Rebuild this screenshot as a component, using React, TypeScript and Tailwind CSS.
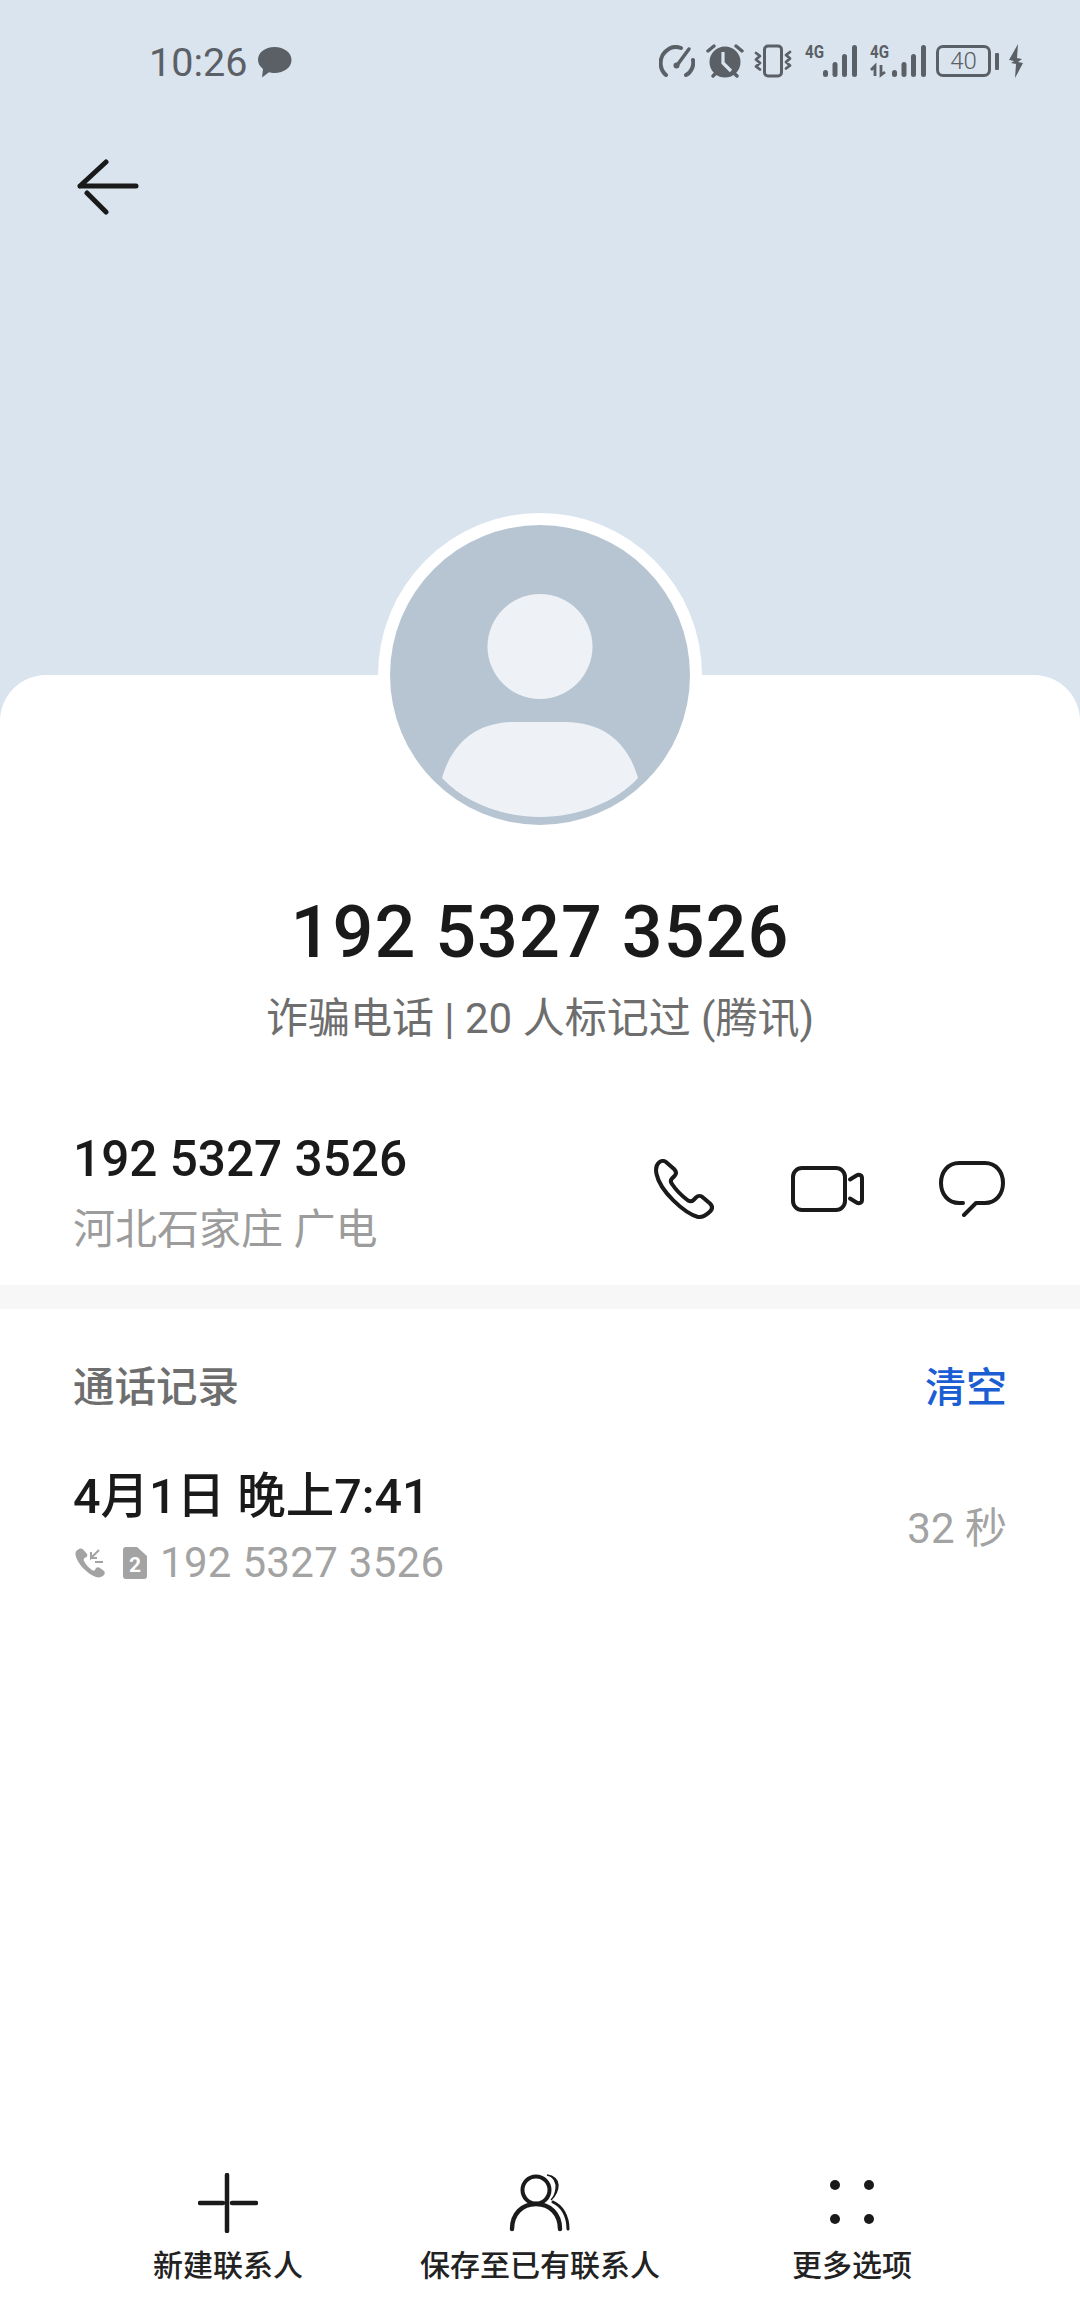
const stack = '"Roboto", "Noto Sans CJK SC", sans-serif';
const ink = '#5b5f66';

function Gauge() {
  return (
    <svg width="36" height="32" viewBox="0 0 36 32" fill="none" stroke={ink} strokeWidth="4" strokeLinecap="round">
      <path d="M7 30C0 24 0 13 6 7c5-5 11-6 16-4" />
      <path d="M27 30c6-3 8-10 7-15" />
      <path d="M19 19L30 4" strokeWidth="3.500" />
      <circle cx="17.500" cy="20.500" r="3" fill={ink} stroke="none" />
    </svg>
  );
}

function Alarm() {
  return (
    <svg width="38" height="34" viewBox="0 0 38 34" fill="none">
      <circle cx="19" cy="18" r="15.500" fill={ink} />
      <path d="M2 7l6-5M36 7l-6-5" stroke={ink} strokeWidth="3.400" strokeLinecap="round" />
      <path d="M7 32l3-3M31 32l-3-3" stroke={ink} strokeWidth="3.400" strokeLinecap="round" />
      <path d="M17 8v11l8 8" stroke="#dae4ee" strokeWidth="3.200" />
    </svg>
  );
}

function Vibrate() {
  return (
    <svg width="38" height="34" viewBox="0 0 38 34" fill="none" stroke={ink} strokeLinecap="round" strokeLinejoin="round">
      <rect x="10.500" y="2" width="17" height="30" rx="3.500" strokeWidth="3" />
      <path d="M2 9l4 3-4 3.500 4 3.500-4 3.500 4 3" strokeWidth="2.800" />
      <path d="M36 8l-4 3 4 3.500-4 3.500 4 3.500-4 3" strokeWidth="2.800" />
    </svg>
  );
}

function Signal({ arrows }: { arrows?: boolean }) {
  const shift = arrows ? 4 : 0;
  const w = arrows ? 56 : 52;
  return (
    <svg width={w} height="42" viewBox={`0 -4 ${w} 42`} fill="none">
      <text x="0" y="14" fontFamily="Roboto, sans-serif" fontWeight="700" fontSize="18" fill={ink} textLength="19" lengthAdjust="spacingAndGlyphs">4G</text>
      {arrows && <path d="M5 32V22l-4 4M11 21v10l4-3" stroke={ink} strokeWidth="2.800" />}
      <rect x={18 + shift} y="26" width="5" height="7" rx="2.500" fill={ink} />
      <rect x={27.500 + shift} y="18" width="5" height="15" rx="2.500" fill={ink} />
      <rect x={37 + shift} y="10" width="5" height="23" rx="2.500" fill={ink} />
      <rect x={47 + shift} y="1" width="5" height="32" rx="2.500" fill={ink} />
    </svg>
  );
}

function Battery() {
  return (
    <div className="ml-[10px] flex items-center gap-[4px]">
      <div className="flex h-[32px] w-[55px] items-center justify-center rounded-[7px] border-[3px] border-[#5b5f66] text-[24px] font-light leading-none text-[#5b5f66]">
        40
      </div>
      <div className="h-[17px] w-[4px] rounded-[1px] bg-[#5b5f66]" />
    </div>
  );
}

function Bolt() {
  return (
    <svg className="ml-[10px]" width="14" height="34" viewBox="0 0 14 34" fill={ink}>
      <path d="M9 0L0 16l5 1-3 2 5 1-1 14 8-15-5-1 4-3-5-1z" />
    </svg>
  );
}

function PhoneIcon() {
  return (
    <svg width="60" height="60" viewBox="0 0 60 60" fill="none" stroke="#1a1a1a" strokeWidth="4" strokeLinejoin="round">
      <path d="M5 3.500C7 1.500 10 1.500 12 3L20 10c2.500 2.500 2.500 5 .5 7L18 19.500c-1.500 1.500-1.500 3.500 0 5.500 4 6 10 12 16 16.500 2 1 4 1 5.500-.5L42 38.500c2-2 5-2 7 0l7 6c2.500 2.500 2.500 5.500 0 8-4 4-8 6-12 5.500C30 54 6 32 2.500 15c-1-5-.5-9 2.500-11.500z" />
    </svg>
  );
}

function VideoIcon() {
  return (
    <svg width="73" height="46" viewBox="0 0 73 46" fill="none" stroke="#1a1a1a" strokeWidth="4" strokeLinejoin="round" strokeLinecap="round">
      <rect x="2" y="2" width="52" height="42" rx="9" />
      <path d="M59 13.500l6.500-4c2.500-1.500 5.500-.5 5.500 2.500v22c0 3-3 4-5.500 2.500l-6.500-4" />
    </svg>
  );
}

function MessageIcon() {
  return (
    <svg width="66" height="56" viewBox="0 0 66 56" fill="none" stroke="#1a1a1a" strokeWidth="4" strokeLinecap="round" strokeLinejoin="round">
      <path d="M24 42h-4C9 42 2 33 2 22S9 2 20 2h26c11 0 18 9 18 20s-7 20-18 20h-9L25 54" />
    </svg>
  );
}

function ActionIcon({ kind }: { kind: 'plus' | 'person' | 'dots' }) {
  if (kind === 'plus') {
    return (
      <svg width="60" height="60" viewBox="0 0 60 60" fill="none" stroke="#1a1a1a" strokeWidth="4.500" strokeLinecap="round">
        <path d="M29 2v56" />
        <path d="M2 30h23M34 30h24" />
      </svg>
    );
  }
  if (kind === 'person') {
    return (
      <svg width="62" height="60" viewBox="0 0 62 60" fill="none" stroke="#1a1a1a" strokeLinecap="round">
        <circle cx="27" cy="17" r="13.500" strokeWidth="4" />
        <path d="M3 56C3 41 13 31 27 31s24 10 24 25" strokeWidth="4.400" />
        <path d="M38 2c7 1 10 8 9 14-.5 4-2 8-5 11 6-6 7-11 7-15 0-5-4-9-11-10z" fill="#1a1a1a" strokeWidth="1.400" />
        <path d="M44 29c9 4 15 14 15 27" strokeWidth="3" />
      </svg>
    );
  }
  return (
    <svg width="46" height="60" viewBox="0 0 46 60" fill="#1a1a1a">
      <circle cx="6" cy="12" r="5" />
      <circle cx="40" cy="12" r="5" />
      <circle cx="6" cy="46" r="5" />
      <circle cx="40" cy="46" r="5" />
    </svg>
  );
}

function BottomAction({ kind, label }: { kind: 'plus' | 'person' | 'dots'; label: string }) {
  return (
    <div className="flex w-[312px] flex-col items-center">
      <div className="flex h-[60px] items-center justify-center">
        <ActionIcon kind={kind} />
      </div>
      <div className="mt-[13px] text-[30px] font-medium leading-[40px] text-[#222222]">{label}</div>
    </div>
  );
}

export default function App() {
  return (
    <div className="relative flex h-[2310px] w-[1080px] flex-col overflow-hidden bg-[#dae4ee]" style={{ fontFamily: stack }}>
      {/* Tinted header with status bar and back arrow */}
      <header className="h-[675px] shrink-0">
        <div className="flex h-[122px] items-center justify-between pl-[149px] pr-[57px]">
          <div className="flex items-center gap-[10px] pt-[4px]">
            <span className="text-[39.500px] leading-none text-[#5b5f66]">10:26</span>
            <svg className="-mt-[2px]" width="35" height="32" viewBox="0 0 35 32" fill={ink}>
              <path d="M17.500 1C27 1 34.500 6.500 34.500 14S27 27 17.500 27c-2 0-4-.3-5.500-.7L5 31.500l1-8.500C3 20.500 1 17.500 1 14 1 6.500 8 1 17.500 1z" />
            </svg>
          </div>
          <div className="flex items-center">
            <Gauge />
            <div className="ml-[11px]"><Alarm /></div>
            <div className="ml-[10px]"><Vibrate /></div>
            <div className="ml-[13px]"><Signal /></div>
            <div className="ml-[13px]"><Signal arrows /></div>
            <Battery />
            <Bolt />
          </div>
        </div>
        <div className="pl-[77px] pt-[37px]">
          <svg width="62" height="56" viewBox="0 0 62 56" fill="none" stroke="#1a1a1a" strokeWidth="5" strokeLinecap="round" strokeLinejoin="round">
            <path d="M3 27h56M29 3L3 27" />
            <path d="M10 34l19 19" />
          </svg>
        </div>
      </header>

      {/* Avatar sits across the header and the sheet */}
      <div className="absolute left-[378px] top-[513px] z-10 flex h-[324px] w-[324px] items-center justify-center rounded-full bg-white">
        <svg width="300" height="300" viewBox="0 0 300 300">
          <circle cx="150" cy="150" r="150" fill="#b7c5d3" />
          <circle cx="150" cy="121.500" r="52.500" fill="#eef2f6" />
          <path
            d="M52 253C60 225 80 197 125 197h50c45 0 65 28 73 56-22 24-60 39-98 39s-76-15-98-39z"
            fill="#eef2f6"
          />
        </svg>
      </div>

      {/* White sheet */}
      <main className="flex flex-1 flex-col rounded-t-[46px] bg-white">
        <div className="pt-[216px] text-center">
          <div className="text-[72px] font-medium leading-[84px] tracking-[1px] text-[#1a1a1a]">192 5327 3526</div>
          <div className="mt-[17px] text-[42px] leading-[54px] text-[#6e6e6e]">诈骗电话 | 20 人标记过 (腾讯)</div>
        </div>

        <section className="mt-[83px] flex items-center justify-between pl-[73px] pr-[75px]">
          <div>
            <div className="text-[49.500px] font-medium leading-[60px] text-[#1a1a1a]">192 5327 3526</div>
            <div className="mt-[15px] text-[42px] leading-[52px] text-[#9c9c9c]">河北石家庄 广电</div>
          </div>
          <div className="mb-[8px] flex items-center">
            <div className="mr-[77px]"><PhoneIcon /></div>
            <div className="mr-[75px]"><VideoIcon /></div>
            <MessageIcon />
          </div>
        </section>

        <div className="mt-[29px] h-[24px] bg-[#f7f7f7]" />

        <section className="flex items-center justify-between pl-[73px] pr-[73px] pt-[52px]">
          <div className="text-[41.500px] font-medium leading-[54px] text-[#6e6e6e]">通话记录</div>
          <div className="text-[41px] font-medium leading-[54px] text-[#1b5dd3]">清空</div>
        </section>

        <section className="mt-[52px] flex items-center justify-between pl-[73px] pr-[73px]">
          <div>
            <div className="text-[48.500px] font-medium leading-[60px] text-[#1a1a1a]">4月1日 晚上7:41</div>
            <div className="mt-[8px] flex items-center">
              <svg className="ml-[2px]" width="30" height="30" viewBox="0 0 30 30" fill="#a3a3a3">
                <path d="M4 1C1.500 2 0 4 .5 7 2 15 12 26 21 29c3 1 6 0 8-2 1-1 1-3 0-4l-4-3c-1-1-3-1-4 0l-1 2c-1 1-2 1-3 0-3-2-6-5-8-9-.5-1-.5-2 .5-3l2-1c1-1 1-2 .5-3L9 2.500C8 1 6 0 4 1z" />
                <path d="M24 2l-8 8v-6M16 10h6M20 14h8" fill="none" stroke="#a3a3a3" strokeWidth="2" />
              </svg>
              <svg className="ml-[18px] overflow-visible" width="24" height="32" viewBox="0 0 24 32">
                <path d="M3 0h11l10 9v20a3 3 0 01-3 3H3a3 3 0 01-3-3V3a3 3 0 013-3z" fill="#a3a3a3" />
                <text x="12" y="25" textAnchor="middle" fontFamily="Roboto, sans-serif" fontSize="21" fontWeight="700" fill="#ffffff">2</text>
              </svg>
              <span className="ml-[13px] text-[42px] leading-[56px] tracking-[0.3px] text-[#a3a3a3]">192 5327 3526</span>
            </div>
          </div>
          <div className="text-[42px] leading-[54px] text-[#a3a3a3]">32 秒</div>
        </section>

        <footer className="mt-auto flex justify-center pb-[24px]">
          <BottomAction kind="plus" label="新建联系人" />
          <BottomAction kind="person" label="保存至已有联系人" />
          <BottomAction kind="dots" label="更多选项" />
        </footer>
      </main>
    </div>
  );
}
